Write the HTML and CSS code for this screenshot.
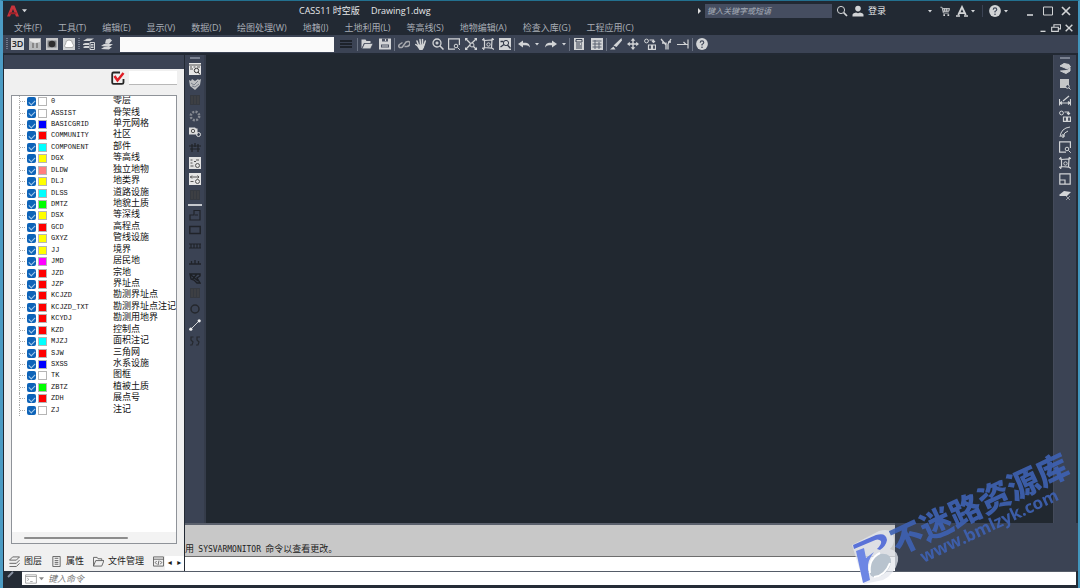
FILE: index.html
```html
<!DOCTYPE html>
<html lang="zh-CN">
<head>
<meta charset="utf-8">
<title>CASS11 时空版 Drawing1.dwg</title>
<link rel="stylesheet" href="styles.css">
</head>
<body>
<svg class="sprite" aria-hidden="true">
  <symbol id="i-caret" viewBox="0 0 4 4"><path d="M0 1h4L2 3.4z" fill="currentColor"/></symbol>
  <symbol id="i-search" viewBox="0 0 12 12"><circle cx="5" cy="5" r="3.6"/><path d="M7.7 7.7 11 11" stroke-width="1.7"/></symbol>
  <symbol id="i-user" viewBox="0 0 12 12"><circle cx="6" cy="3.6" r="2.8" fill="currentColor" stroke="none"/><path d="M.5 11.5V9.600Q1 8 4 7.500L6 8.200 8 7.500Q11 8 11.500 9.600V11.500z" fill="currentColor" stroke="none"/></symbol>
  <symbol id="i-cart" viewBox="0 0 12 12"><path d="M.5 1.500H2.500L4 8.500H10.500M3 3h8.500L10.500 6.500H3.600M3.200 4.800h8M5.500 3v3.500M8 3v3.500"/><path d="M4 10h2v2H4zM9 10h2v2H9z" fill="currentColor" stroke="none"/></symbol>
  <symbol id="i-a360" viewBox="0 0 12 12"><path d="M2.200 10 6 2l3.800 8M3 8.200h6" stroke-width="1.800"/><path d="M0 11h4M8 11h4" stroke-width="1.600"/></symbol>
  <symbol id="i-help" viewBox="0 0 12 12"><circle cx="6" cy="6" r="5.900" fill="currentColor" stroke="none"/><path d="M4.200 4.700Q4.300 2.900 6 2.900t1.800 1.700Q7.800 5.700 6 6.400V7.600" stroke="#3b4354" stroke-width="1.100"/><circle cx="6" cy="9.200" r=".8" fill="#3b4354" stroke="none"/></symbol>
  <symbol id="i-min" viewBox="0 0 12 12"><path d="M3 10h6" stroke-width="1.600"/></symbol>
  <symbol id="i-max" viewBox="0 0 12 12"><path d="M1.500 2h9v8h-9z"/></symbol>
  <symbol id="i-restore" viewBox="0 0 12 12"><path d="M3.500 5V2h8v5H9M.8 5h8v5h-8z" stroke-width="1.300"/></symbol>
  <symbol id="i-close" viewBox="0 0 12 12"><path d="m2 2 8 8M10 2l-8 8" stroke-width="1.700"/></symbol>

  <symbol id="i-img" viewBox="0 0 12 12"><path d="M0 0h12v12H0z" fill="#b9bbbd" stroke="none"/><path d="M1 1h10v3L6 5 1 3z" fill="#e6e6e6" stroke="none"/><path d="M3 5h2v5H3zM7 5h2v5H7z" fill="#888" stroke="none"/></symbol>
  <symbol id="i-render" viewBox="0 0 12 12"><path d="M0 0h12v12H0z" fill="#c6c7c8" stroke="none"/><path d="M1.500 2.500h9v7h-9z" fill="#7d7f82" stroke="none"/><circle cx="6" cy="6" r="3.300" fill="#2d2d2d" stroke="none"/></symbol>
  <symbol id="i-cloud" viewBox="0 0 12 12"><path d="M0 0h12v12H0z" fill="#d0d2d4" stroke="none"/><path d="M2.500 9.500Q.5 8 2.500 6 2.500 2 6 2t3.500 3.500Q12 7 9.500 9.500z" fill="#fff" stroke="#999" stroke-width=".8"/></symbol>
  <symbol id="i-layprop" viewBox="0 0 12 12"><path d="M0 3 4 .5H11L7 3zM0 6l2-1h4v2H0zM0 9l2-1h4v2H1z" fill="currentColor" stroke="none"/><path d="M7 4.500h4.500v7H7z" fill="#3b4354"/><path d="M8 6.500h2.500M8 8h2.500M8 9.500h2.500"/></symbol>
  <symbol id="i-layers" viewBox="0 0 12 12"><path d="M0 11 3 9h8l-3 2.500zM0 8l3-2h9L8 9z" fill="currentColor" stroke="none"/><path d="M4 5.500 5 1.500 9 .5l2 2L8 6z" fill="currentColor" stroke="none"/></symbol>
  <symbol id="i-lines" viewBox="0 0 12 12"><path d="M0 3h12M0 6h12M0 9h12" stroke="#15181c" stroke-width="1.500"/></symbol>
  <symbol id="i-open" viewBox="0 0 12 12"><path d="M.5 10.500v-9h4l1 1.500h4V5H3z" fill="currentColor" stroke="none"/><path d="M3.500 5.500H12L9.500 10.800H1z" fill="currentColor" stroke="#3b4354" stroke-width=".6"/></symbol>
  <symbol id="i-save" viewBox="0 0 12 12"><path d="M0 .5h12v11H0z" fill="currentColor" stroke="none"/><path d="M3 .5h6v3H3zM2 6.500h8v3H2z" fill="#4b5262" stroke="none"/><path d="M6.500 1v2M3 8h6" /></symbol>
  <symbol id="i-link" viewBox="0 0 12 12"><path d="M4 9.500H1.500Q0 8 1.500 6.500L4.500 4.500M4 9.500 8 4q3-1.500 4 1 0 3-3 3.500H6.500" stroke="#a7a9ae" stroke-width="1.500"/></symbol>
  <symbol id="i-hand" viewBox="0 0 12 12"><path d="M3.500 7 2 3M5.500 6 5 1.500M7.500 6V1.500M9 7l1.300-4M4 9 .8 6.500" stroke-width="1.500" stroke-linecap="round"/><path d="M3 6.500 9.700 6 9 9.500 7.500 12h-3L2.500 9z" fill="currentColor" stroke="none"/></symbol>
  <symbol id="i-zoom" viewBox="0 0 12 12"><circle cx="5" cy="5" r="4" stroke-width="1.300"/><path d="M3.500 5h3M5 3.500v3M7.800 7.800 11.500 11.500" stroke-width="1.500"/></symbol>
  <symbol id="i-zoomwin" viewBox="0 0 12 12"><path d="M7 11.200H.6V.8h10.800V7" stroke-width="1.200"/><circle cx="8" cy="8" r="1.800"/><path d="m9.500 9.500 2.300 2.300"/></symbol>
  <symbol id="i-zoomext" viewBox="0 0 12 12"><path d="m1 1 10 10M11 1 1 11" stroke-width="1.400"/><path d="M0 3V0h3zM12 3V0H9zM0 9v3h3zM12 9v3H9z" fill="currentColor" stroke="none"/><circle cx="7" cy="7" r="2" fill="#3b4354"/></symbol>
  <symbol id="i-zoomobj" viewBox="0 0 12 12"><path d="M2.500 2.500 10 2 9.500 10l-7-.5zM0 1.500l3 1M9 2.500l3-1.500M0 10.500l3-1M9 9.500l3 2M1.500 0l1 3M10.500 0l-1 3M2.500 9l-1 3" stroke-width="1.200"/><circle cx="6.500" cy="6.500" r="1.700"/></symbol>
  <symbol id="i-zoomprev" viewBox="0 0 12 12"><path d="M0 0h12v12H0z" fill="currentColor" stroke="none"/><circle cx="7" cy="5" r="2.600" stroke="#303746"/><path d="M8.500 7l3 3.500M5 6.500 1.500 9M1.500 3.500h3" stroke="#303746" stroke-width="1.300"/></symbol>
  <symbol id="i-undo" viewBox="0 0 12 12"><path d="M0 6 5 2.500v2.200h3Q11.500 5 12 9.500 10.500 7.200 8 7.200H5v2.300z" fill="currentColor" stroke="none"/></symbol>
  <symbol id="i-redo" viewBox="0 0 12 12"><path d="M12 6 7 2.500v2.200H4Q.5 5 0 9.500 1.500 7.200 4 7.200h3v2.300z" fill="currentColor" stroke="none"/></symbol>
  <symbol id="i-props" viewBox="0 0 12 12"><path d="M1 0h10v12H1z" fill="currentColor" stroke="none"/><path d="M3 1.500h6v2.500H3zM3 6h4M3 8h6M3 10h6M8 6h1" stroke="#3b4354"/></symbol>
  <symbol id="i-grid" viewBox="0 0 12 12"><path d="M0 0h12v12H0z" fill="currentColor" stroke="none"/><path d="M1.500 3h9M1.500 6h9M1.500 9h9M4 2v9M8 4v7" stroke="#5b6272"/></symbol>
  <symbol id="i-brush" viewBox="0 0 12 12"><path d="M11.500 0 12 2.500 6.500 9 3.500 7.500z" fill="currentColor" stroke="none"/><path d="M3.500 8.500 0 11.500h5.500z" fill="currentColor" stroke="none"/></symbol>
  <symbol id="i-move" viewBox="0 0 12 12"><path d="M6 1v10M1 6h10" stroke-width="1.400"/><path d="M6 0 8.300 2.800H3.700zM6 12l2.300-2.800H3.700zM0 6l2.800-2.300v4.600zM12 6 9.200 3.700v4.600z" fill="currentColor" stroke="none"/></symbol>
  <symbol id="i-copy" viewBox="0 0 12 12"><circle cx="2.500" cy="3" r="1.900"/><path d="M5.500 2H9.500V4M8 3l1.500 1.500L11 3M4.500 7h3v4.300h-3zM8.500 7h3v4.300h-3z" stroke-width="1.200"/></symbol>
  <symbol id="i-trim" viewBox="0 0 12 12"><path d="m1 1 5 6M11 1 8 6M6 4.500V11.500M8 6v5.500M8 4h3M2 5h3" stroke-width="1.300"/></symbol>
  <symbol id="i-extend" viewBox="0 0 12 12"><path d="M0 6.500h11M11 1.500v9M6.500 4 9 6.500" stroke-width="1.200"/></symbol>

  <symbol id="s-text" viewBox="0 0 12 12"><path d="M0 0h12v12H0z" fill="#e7e7e7" stroke="none"/><path d="M0 2h12M1 4h2M4.500 4h2M8 4h3M1 6h3" stroke="#555"/><circle cx="7.500" cy="7.500" r="2.200" stroke="#333"/><path d="m9 9 2 2.500" stroke="#333"/></symbol>
  <symbol id="s-shield" viewBox="0 0 12 12"><path d="m0 2 2 1 1-2 3 2 3-2 1 1 2-1-1 6-5 5-5-4z" fill="#bfc1c3" stroke="none"/><path d="m2 5 3 2 4-4M3 8l3 1 4-3" stroke="#6a707c" stroke-width=".8"/></symbol>
  <symbol id="s-dim" viewBox="0 0 12 12"><path d="M1 1h10v10H1z" fill="#353940" stroke="none"/><path d="M3 2v8M6 2v8M9 2v8" stroke="#474747"/></symbol>
  <symbol id="s-ring" viewBox="0 0 12 12"><circle cx="6" cy="6" r="4.200" stroke="#858991" stroke-width="2.500" stroke-dasharray="2 1.300"/></symbol>
  <symbol id="s-cam" viewBox="0 0 12 12"><path d="M0 1.500h6l1 1h1.500v6H0z" fill="#ddd" stroke="none"/><circle cx="4" cy="5" r="1.700" stroke="#555"/><circle cx="9.500" cy="8.500" r="2" stroke="#ddd"/></symbol>
  <symbol id="s-fence" viewBox="0 0 12 12"><path d="M0 5h12M1 8h10M3 3v8M6 2v4M9 3v8" stroke="#202226" stroke-width="1.200"/></symbol>
  <symbol id="s-form" viewBox="0 0 12 12"><path d="M0 0h12v12H0z" fill="#e1e1e1" stroke="none"/><path d="M1.500 3h2M1.500 6h2M1.500 9h3M5 5l1-1 1 1M7 3h3" stroke="#555"/><circle cx="8.500" cy="8.500" r="2" stroke="#555"/></symbol>
  <symbol id="s-form2" viewBox="0 0 12 12"><path d="M0 0h12v12H0z" fill="#e5e5e5" stroke="none"/><path d="M1 4h9M3 2.500 1.500 4 3 5.500M8.500 2.500 10 4 8.500 5.500M1.500 8.500h3" stroke="#555"/><circle cx="8.500" cy="8.500" r="2" stroke="#555"/></symbol>
  <symbol id="s-stair" viewBox="0 0 12 12"><path d="M1 11V6h4V1.500h6V11zM6 6h3" stroke="#202329" stroke-width="1.200"/></symbol>
  <symbol id="s-rect" viewBox="0 0 12 12"><path d="M.8 2.500h10.400v7H.8z" stroke="#202329" stroke-width="1.400"/></symbol>
  <symbol id="s-cells" viewBox="0 0 12 12"><path d="M0 4h12M0 8h12M2 4v4M5 4v4M8 4v4M11 4v4" stroke="#202329" stroke-width="1.200"/></symbol>
  <symbol id="s-ticks" viewBox="0 0 12 12"><path d="M0 8h12M2.500 5v3M6 4v4M9.500 5v3" stroke="#202329" stroke-width="1.300"/></symbol>
  <symbol id="s-hatch" viewBox="0 0 12 12"><path d="M1 2h10v2L8 6l3 5H8L5 8 2 7zM2 3l7 6M8 2 3 8" stroke="#1d2025" stroke-width="1.400"/></symbol>
  <symbol id="s-circle" viewBox="0 0 12 12"><circle cx="6" cy="6" r="4" stroke="#25282d" stroke-width="1.500"/></symbol>
  <symbol id="s-node" viewBox="0 0 12 12"><path d="m1.500 10.500 9-9"/><circle cx="1.800" cy="10.200" r="1.600" fill="#eee" stroke="none"/><circle cx="10.200" cy="1.800" r="1.600" fill="#eee" stroke="none"/></symbol>
  <symbol id="s-curve" viewBox="0 0 12 12"><path d="M4.500 2H2v3l2 2-1 3H1M11 2H8v3l2 2-1 3H7" stroke="#26292e" stroke-width="1.200"/></symbol>

  <symbol id="r-erase" viewBox="0 0 12 12"><path d="M1 3 5 .5 10 1.500 11.500 4 8 6 5 4.500zM1.500 8 7 10.500 11 8V5L8 7.500z" fill="#c9cbce" stroke="#c9cbce"/></symbol>
  <symbol id="r-block" viewBox="0 0 12 12"><path d="M1 1h9v9H1z" fill="#c4c6c8" stroke="none"/><circle cx="8.500" cy="8.500" r="1.800" fill="#3b4354"/><path d="m10 10 1.500 1.500"/></symbol>
  <symbol id="r-mirror" viewBox="0 0 12 12"><path d="M.5 5v6.500M11.500 5v6.500M1 9h10M3 7.500 1 9l2 1.500M9 7.500 11 9 9 10.500M4 7 10 2" stroke-width="1.200"/></symbol>
  <symbol id="r-arc" viewBox="0 0 12 12"><path d="M1 11Q2 2 11 1M4 11Q5 6 9 5"/><circle cx="4" cy="10" r="1.300"/></symbol>
  <symbol id="r-scale" viewBox="0 0 12 12"><path d="M.8.8h10.400v10.400H.8zM.8 7H6v4.200" stroke-width="1.200"/></symbol>
  <symbol id="r-break" viewBox="0 0 12 12"><path d="M0 6 5 2l7 1-4 4H1z" fill="#d5d7d9" stroke="none"/><path d="m7 7 4 4M11 7l-4 4" stroke="#9a9da3"/></symbol>
  <symbol id="t-layers" viewBox="0 0 12 12"><path d="M4 1h7.500L8 4.500H.5zM.5 8H8l3.500-3.500M.5 11.500H8L11.500 8"/></symbol>
  <symbol id="t-props" viewBox="0 0 12 12"><path d="M2 .5h8v11H2zM4 2.500h4M4 5h4M4 7h4M4 9h4"/></symbol>
  <symbol id="t-folder" viewBox="0 0 12 12"><path d="M.5 11V1.500h4l1 1.500h4v2M.5 11 3 5h9l-2.500 6z"/></symbol>
  <symbol id="t-code" viewBox="0 0 12 12"><path d="M.5 1h11v10H.5zM.5 3.500h11M4 5.500 2.500 7 4 9M8 5.500 9.500 7 8 9M6.500 5l-1 5"/></symbol>
  <symbol id="t-prompt" viewBox="0 0 14 12"><path d="M.5 1h13v10H.5zM.5 3h13M2.500 5l2 1.500-2 1.500M6 9h3"/></symbol>
</svg>

<div class="window">
  <header class="titlebar">
    <button class="app-menu" aria-label="应用程序菜单">
      <svg class="logo" viewBox="0 0 12 12"><path d="M0 11.500 4.500 .5h3L12 11.500H9L6 4 3 11.500z" fill="#c8343c"/><path d="M3 7.300h6.500v2H2z" fill="#9c2229"/></svg>
      <svg class="caret wide"><use href="#i-caret"/></svg>
    </button>
    <h1 class="title"><span>CASS11 时空版</span><span>Drawing1.dwg</span></h1>
    <div class="tb-search">
      <span class="play"></span>
      <input class="search-box" type="text" placeholder="键入关键字或短语" aria-label="搜索">
      <button aria-label="搜索"><svg class="icon"><use href="#i-search"/></svg></button>
      <button class="login"><svg class="icon"><use href="#i-user"/></svg>登录</button>
    </div>
    <div class="tb-apps">
      <svg class="caret"><use href="#i-caret"/></svg>
      <button class="cart" aria-label="购物车"><svg class="icon small"><use href="#i-cart"/></svg></button>
      <button aria-label="应用"><svg class="icon"><use href="#i-a360"/></svg></button>
      <svg class="caret"><use href="#i-caret"/></svg>
      <span class="tb-sep"></span>
      <button aria-label="帮助"><svg class="icon"><use href="#i-help"/></svg></button>
      <svg class="caret"><use href="#i-caret"/></svg>
    </div>
    <div class="win-controls">
      <button aria-label="最小化"><svg class="icon"><use href="#i-min"/></svg></button>
      <button aria-label="最大化"><svg class="icon"><use href="#i-max"/></svg></button>
      <button aria-label="关闭"><svg class="icon"><use href="#i-close"/></svg></button>
    </div>
  </header>

  <nav class="menubar">
    <button>文件(F)</button><button>工具(T)</button><button>编辑(E)</button><button>显示(V)</button><button>数据(D)</button><button>绘图处理(W)</button><button>地籍(J)</button><button>土地利用(L)</button><button>等高线(S)</button><button>地物编辑(A)</button><button>检查入库(G)</button><button>工程应用(C)</button>
    <div class="doc-controls">
      <button aria-label="最小化文档"><svg class="icon small"><use href="#i-min"/></svg></button>
      <button aria-label="还原文档"><svg class="icon small"><use href="#i-restore"/></svg></button>
      <button aria-label="关闭文档"><svg class="icon small"><use href="#i-close"/></svg></button>
    </div>
  </nav>

  <div class="toolbar">
    <span class="grip"></span>
    <div class="group four">
      <button class="three-d">3D</button>
      <button aria-label="图像"><svg class="icon"><use href="#i-img"/></svg></button>
      <button aria-label="渲染"><svg class="icon"><use href="#i-render"/></svg></button>
      <button aria-label="云"><svg class="icon"><use href="#i-cloud"/></svg></button>
    </div>
    <span class="grip"></span>
    <div class="group two">
      <button aria-label="图层特性"><svg class="icon"><use href="#i-layprop"/></svg></button>
      <button aria-label="图层"><svg class="icon"><use href="#i-layers"/></svg></button>
    </div>
    <select class="layer-select" aria-label="当前图层"><option></option></select>
    <button class="lines" aria-label="线型"><svg class="icon"><use href="#i-lines"/></svg></button>
    <span class="sep"></span>
    <div class="group two">
      <button aria-label="打开"><svg class="icon"><use href="#i-open"/></svg></button>
      <button aria-label="保存"><svg class="icon"><use href="#i-save"/></svg></button>
    </div>
    <span class="sep"></span>
    <div class="group seven">
      <button aria-label="链接"><svg class="icon"><use href="#i-link"/></svg></button>
      <button aria-label="平移"><svg class="icon"><use href="#i-hand"/></svg></button>
      <button aria-label="缩放"><svg class="icon"><use href="#i-zoom"/></svg></button>
      <button aria-label="窗口缩放"><svg class="icon"><use href="#i-zoomwin"/></svg></button>
      <button aria-label="范围缩放"><svg class="icon"><use href="#i-zoomext"/></svg></button>
      <button aria-label="对象缩放"><svg class="icon"><use href="#i-zoomobj"/></svg></button>
      <button aria-label="上一视图"><svg class="icon"><use href="#i-zoomprev"/></svg></button>
    </div>
    <span class="sep"></span>
    <div class="group history">
      <button aria-label="放弃"><svg class="icon"><use href="#i-undo"/></svg></button>
      <svg class="caret"><use href="#i-caret"/></svg>
      <button aria-label="重做"><svg class="icon"><use href="#i-redo"/></svg></button>
      <svg class="caret"><use href="#i-caret"/></svg>
    </div>
    <span class="sep"></span>
    <div class="group two">
      <button aria-label="特性"><svg class="icon"><use href="#i-props"/></svg></button>
      <button aria-label="表格"><svg class="icon"><use href="#i-grid"/></svg></button>
    </div>
    <span class="sep"></span>
    <div class="group five">
      <button aria-label="特性匹配"><svg class="icon"><use href="#i-brush"/></svg></button>
      <button aria-label="移动"><svg class="icon"><use href="#i-move"/></svg></button>
      <button aria-label="复制"><svg class="icon"><use href="#i-copy"/></svg></button>
      <button aria-label="修剪"><svg class="icon"><use href="#i-trim"/></svg></button>
      <button aria-label="延伸"><svg class="icon"><use href="#i-extend"/></svg></button>
    </div>
    <span class="sep"></span>
    <button aria-label="帮助"><svg class="icon"><use href="#i-help"/></svg></button>
  </div>

  <main class="main">
    <aside class="panel">
      <div class="panel-head"></div>
      <div class="panel-body">
        <div class="filter">
          <button aria-label="全选"><svg class="check-all" viewBox="0 0 14 14"><path d="M9 1.500H2.500Q1.200 1.500 1.200 3v8.500q0 1.300 1.300 1.300H11q1.500 0 1.500-1.300V8" fill="none" stroke="#262626" stroke-width="1.800"/><path d="m3.500 5 3 4.500L12.500 2" fill="none" stroke="#e01e26" stroke-width="2.500"/></svg></button>
          <input type="text" aria-label="筛选图层">
        </div>
        <div class="tree-box">
          <ul class="tree" id="tree"></ul>
          <div class="hscroll"><div class="thumb"></div></div>
        </div>
        <div class="tabs">
          <button><svg class="icon"><use href="#t-layers"/></svg>图层</button>
          <button><svg class="icon"><use href="#t-props"/></svg>属性</button>
          <button><svg class="icon"><use href="#t-folder"/></svg>文件管理</button>
          <button class="code-tab" aria-label="代码"><svg class="icon"><use href="#t-code"/></svg></button>
          <div class="tab-arrows"><button aria-label="上一个">◂</button><button aria-label="下一个">▸</button></div>
        </div>
      </div>
    </aside>

    <section class="work">
      <div class="stage">
        <div class="strip">
          <span class="strip-grip"></span>
          <div class="strip-group">
            <button aria-label="文字查找"><svg class="icon"><use href="#s-text"/></svg></button>
            <button aria-label="检查"><svg class="icon"><use href="#s-shield"/></svg></button>
            <button aria-label="填充"><svg class="icon"><use href="#s-dim"/></svg></button>
            <button aria-label="环"><svg class="icon"><use href="#s-ring"/></svg></button>
            <button aria-label="影像"><svg class="icon"><use href="#s-cam"/></svg></button>
            <button aria-label="栅栏"><svg class="icon"><use href="#s-fence"/></svg></button>
            <button aria-label="坐标"><svg class="icon"><use href="#s-form"/></svg></button>
            <button aria-label="距离"><svg class="icon"><use href="#s-form2"/></svg></button>
            <button aria-label="面积"><svg class="icon"><use href="#s-dim"/></svg></button>
          </div>
          <span class="strip-line"></span>
          <div class="strip-group">
            <button aria-label="多点房屋"><svg class="icon"><use href="#s-stair"/></svg></button>
            <button aria-label="四点房屋"><svg class="icon"><use href="#s-rect"/></svg></button>
            <button aria-label="围墙"><svg class="icon"><use href="#s-cells"/></svg></button>
            <button aria-label="陡坎"><svg class="icon"><use href="#s-ticks"/></svg></button>
            <button aria-label="植被"><svg class="icon"><use href="#s-hatch"/></svg></button>
            <button aria-label="电力"><svg class="icon"><use href="#s-dim"/></svg></button>
            <button aria-label="圆"><svg class="icon"><use href="#s-circle"/></svg></button>
            <button aria-label="直线"><svg class="icon"><use href="#s-node"/></svg></button>
            <button aria-label="曲线"><svg class="icon"><use href="#s-curve"/></svg></button>
          </div>
        </div>
        <div class="canvas"></div>
        <div class="strip strip-right">
          <span class="strip-grip"></span>
          <div class="strip-group">
            <button aria-label="删除"><svg class="icon"><use href="#r-erase"/></svg></button>
            <button aria-label="块"><svg class="icon"><use href="#r-block"/></svg></button>
            <button aria-label="标注"><svg class="icon"><use href="#r-mirror"/></svg></button>
            <button aria-label="复制"><svg class="icon"><use href="#i-copy"/></svg></button>
            <button aria-label="偏移"><svg class="icon"><use href="#r-arc"/></svg></button>
            <button aria-label="窗口"><svg class="icon"><use href="#i-zoomwin"/></svg></button>
            <button aria-label="阵列"><svg class="icon"><use href="#i-zoomobj"/></svg></button>
            <button aria-label="比例"><svg class="icon"><use href="#r-scale"/></svg></button>
            <button aria-label="打断"><svg class="icon"><use href="#r-break"/></svg></button>
          </div>
        </div>
      </div>
      <div class="console">
        <div class="log"><p>用 <code>SYSVARMONITOR</code> 命令以查看更改。</p></div>
        <div class="log-input"></div>
      </div>
    </section>
  </main>

  <footer class="command">
    <svg class="wrench" viewBox="0 0 14 14"><path d="m3 6 5-5" stroke="#8b93a3" stroke-width="2"/></svg>
    <div class="command-line">
      <svg class="prompt"><use href="#t-prompt"/></svg>
      <svg class="caret wide"><use href="#i-caret"/></svg>
      <input type="text" placeholder="键入命令" aria-label="命令">
    </div>
  </footer>
</div>

<div class="watermark">
  <svg class="mark" viewBox="0 0 50 60">
    <path d="M2 19 29 5q14-4 15 8 0 6-4 10 9 2 8 12-3 13-15 19L14 58z" fill="#e4e7ee" opacity=".75"/>
    <path d="M3 19 26 9q10-3 11 5-1 6-7 10l-3-1q5-5 4-8-3-3-8 0L4 23z" fill="#5a72d8"/>
    <path d="M6 25l8-3 2 10 8-6q-7 9-6 17l2 11-7 3z" fill="#6d86e4"/>
    <path d="M20 48q-2-15 9-20 13-2 12 9-3 11-13 14-6 1-8-3z" fill="#b8c3ce"/>
    <path d="M20 47q-2-14 10-20M24 51q11-1 16-14" fill="none" stroke="#fff" stroke-width="2"/>
  </svg>
  <div class="mark-text">
    <div class="mark-name">不迷路资源库</div>
    <div class="mark-url">www.bmlzyk.com</div>
  </div>
</div>
<script src="script.js"></script>
</body>
</html>
```

FILE: styles.css
```css
* { box-sizing: border-box; }

body {
  margin: 0;
  background: #212830;
  font-family: "Open Sans", "Noto Sans CJK SC", sans-serif;
  font-size: 9px;
  line-height: 12px;
  color: #d4d6da;
}

button {
  display: inline-flex;
  align-items: center;
  justify-content: center;
  margin: 0;
  padding: 0;
  border: 0;
  background: none;
  color: inherit;
  font: inherit;
  white-space: nowrap;
}

input, select { font: inherit; border: 0; padding: 0; margin: 0; border-radius: 0; min-width: 0; }

.sprite { position: absolute; width: 0; height: 0; }
.icon { width: 12px; height: 12px; flex: none; fill: none; stroke: currentColor; color: #d2d4d6; }
.icon.small { width: 10px; height: 10px; }
.caret { width: 4px; height: 4px; flex: none; }
.caret.wide { width: 5px; height: 5px; }

.window {
  display: flex;
  flex-direction: column;
  height: 100vh;
  border-top: 1px solid #23708f;
  border-left: 3px solid #4c9cc4;
  border-right: 2px solid #4296bd;
}

/* Title bar */
.titlebar { display: flex; align-items: center; height: 19px; padding: 0 6px 0 4px; background: #222933; }
.app-menu { gap: 3px; }
.logo { width: 12px; height: 12px; }
.title { display: flex; gap: 11px; margin: 0 auto 0 272px; font-size: 9px; font-weight: 400; color: #e6e8ea; }
.tb-search { display: flex; align-items: center; gap: 4px; }
.play { border: 3px solid transparent; border-left-color: #ddd; border-right: 0; }
.search-box { width: 127px; height: 14px; padding: 0 2px; background: #454d60; color: #eee; font-size: 8px; font-style: italic; }
.search-box::placeholder { color: #a7adb8; opacity: 1; }
.login { gap: 4px; color: #e6e8ea; }
.tb-apps { display: flex; align-items: center; gap: 3px; margin-left: 42px; }
.cart { margin: 0 3px 0 5px; }
.tb-sep { width: 1px; height: 12px; margin: 0 3px 0 4px; background: #3b4354; }
.win-controls { display: flex; gap: 6px; margin-left: 16px; }

/* Menu bar */
.menubar { display: flex; align-items: center; gap: 16px; height: 15px; padding: 0 4px 0 11px; background: #222933; color: #a9aeb6; }
.doc-controls { display: flex; gap: 3px; margin-left: auto; }

/* Toolbar */
.toolbar { display: flex; align-items: center; gap: 3px; height: 18px; padding-left: 3px; background: #3b4354; }
.grip { width: 2px; height: 12px; background: repeating-linear-gradient(#71798a 0 1px, #3b4354 1px 2px); }
.sep { width: 1px; height: 13px; background: #6a7282; }
.group { display: flex; align-items: center; justify-content: space-between; }
.two { width: 30px; }
.four { width: 64px; }
.five { width: 79px; }
.seven { width: 113px; }
.history { width: 48px; }
.three-d { width: 13px; height: 12px; background: #d6d8da; color: #20242b; font-weight: 600; }
.layer-select { width: 214px; height: 15px; margin-left: 4px; background: #fafafa; appearance: none; }
.lines { width: 17px; }

/* Main area */
.main { display: flex; flex: 1; min-height: 0; border-top: 2px solid #222933; background: #3b4354; }
.panel { display: flex; flex-direction: column; width: 182px; border-left: 1px solid #222933; border-right: 1px solid #222933; color: #1c1c1c; }
.panel-head { height: 14px; background: #3b4354; }
.panel-body { display: flex; flex-direction: column; flex: 1; min-height: 0; padding: 2px 7px 0; background: #f0f0f0; }
.filter { display: flex; align-items: center; justify-content: flex-end; gap: 4px; height: 14px; margin-bottom: 10px; }
.filter input { width: 48px; height: 14px; background: #fff; border-bottom: 1px solid #b8b8b8; }
.check-all { width: 14px; height: 14px; }

.tree-box { display: flex; flex-direction: column; flex: 1; min-height: 0; border: 1px solid #8f9399; background: #fff; overflow: hidden; }
.tree {
  display: grid;
  grid-auto-rows: 1fr;
  height: 320px;
  margin: 0 0 auto 7px;
  padding: 0;
  list-style: none;
  font-family: "Liberation Mono", "Noto Sans CJK SC", monospace;
  line-height: 11px;
}
.tree li { border-left: 1px dotted #aaa; }
.tree label { display: grid; grid-template-columns: 5px 9px 9px 62px 1fr; column-gap: 2px; align-items: center; height: 100%; white-space: nowrap; color: #111; }
.tree label::before { content: ""; border-top: 1px dotted #aaa; }
.tree input { appearance: none; width: 9px; height: 9px; border-radius: 2px; background: #0d63b8; display: grid; place-items: center; }
.tree input::after { content: ""; width: 5px; height: 3px; border: solid #a9cbea; border-width: 0 0 1px 1px; transform: rotate(-45deg); }
.swatch { width: 9px; height: 9px; border: 1px solid #b5b5b5; }
.code { font-size: 7px; padding-left: 2px; }
.hscroll { height: 11px; padding: 5px 48px 0 12px; background: #f3f3f3; }
.thumb { height: 2px; background: #8d8d8d; border-radius: 1px; }

.tabs { display: flex; align-items: center; gap: 9px; height: 18px; margin: 8px -7px 1px -2px; }
.tabs button { gap: 4px; }
.tabs .icon { width: 11px; height: 11px; color: #5e5e5e; }
.tabs .code-tab { margin-right: -8px; }
.tab-arrows { display: flex; flex: 1; align-self: stretch; align-items: center; margin-top: 4px; background: #fff; }
.tab-arrows button { flex: 1; font-family: "DejaVu Sans", sans-serif; font-size: 8px; }

.work { display: flex; flex-direction: column; flex: 1; min-width: 0; }
.stage { display: flex; flex: 1; min-height: 0; }
.strip { width: 21px; display: flex; flex-direction: column; align-items: center; padding-top: 2px; border-right: 2px solid #353c4a; }
.strip-right { width: 25px; border-right: 2px solid #252c36; border-left: 1px solid #444b5b; }
.strip-grip { width: 10px; height: 2px; margin-bottom: 2px; background: #7a8190; }
.strip-group { display: flex; flex-direction: column; justify-content: space-between; height: 141px; }
.strip-group button { height: 15px; }
.strip-line { width: 14px; height: 2px; margin: 2px 0 1px; background: #c5c8cd; }
.canvas { flex: 1; background: #212830; }

.console { display: flex; flex-direction: column; height: 48px; margin-right: 183px; border-top: 2px solid #5b616d; }
.log { display: flex; align-items: flex-end; flex: 1; background: #c8c8c8; color: #222; overflow: hidden; }
.log p { margin: 0; white-space: nowrap; }
.log code { font-family: "DejaVu Sans Mono", monospace; font-size: 8px; padding: 0 2px; }
.log-input { height: 15px; background: #fff; border-top: 1px solid #6d6d6d; }

/* Command line */
.command { display: flex; height: 17px; padding: 0 2px 3px 2px; background: #252c36; }
.wrench { width: 14px; height: 14px; margin-right: 3px; }
.command-line { display: flex; align-items: center; gap: 2px; flex: 1; padding-left: 3px; background: #fff; border-top: 1px solid #555c68; color: #888; }
.prompt { width: 12px; height: 10px; fill: none; stroke: #999; }
.command-line input { flex: 1; margin-left: 2px; background: none; font-style: italic; }
.command-line input::placeholder { color: #777; opacity: 1; }

/* Watermark over the workspace */
.watermark { position: fixed; right: 0; bottom: 0; width: 230px; height: 150px; pointer-events: none; }
.mark { position: absolute; left: 0; bottom: 2px; width: 50px; height: 60px; }
.mark-text { position: absolute; left: 57px; bottom: 13px; transform: rotate(-25deg); transform-origin: 0 100%; color: #3f62b4; font-weight: 700; white-space: nowrap; opacity: 0.9; }
.mark-name { font-size: 32px; line-height: 32px; font-family: "Noto Sans CJK SC", sans-serif; font-weight: 900; }
.mark-url { padding-left: 20px; font-size: 17px; line-height: 20px; }
```

FILE: script.js
```js
const layers = [
  ["0", "零层", "#fff"],
  ["ASSIST", "骨架线", "#fff"],
  ["BASICGRID", "单元网格", "#00f"],
  ["COMMUNITY", "社区", "#f00"],
  ["COMPONENT", "部件", "#0ff"],
  ["DGX", "等高线", "#ff0"],
  ["DLDW", "独立地物", "#ff7f7f"],
  ["DLJ", "地类界", "#ff0"],
  ["DLSS", "道路设施", "#0ff"],
  ["DMTZ", "地貌土质", "#0f0"],
  ["DSX", "等深线", "#ff0"],
  ["GCD", "高程点", "#f00"],
  ["GXYZ", "管线设施", "#ff0"],
  ["JJ", "境界", "#ff0"],
  ["JMD", "居民地", "#f0f"],
  ["JZD", "宗地", "#f00"],
  ["JZP", "界址点", "#f00"],
  ["KCJZD", "勘测界址点", "#f00"],
  ["KCJZD_TXT", "勘测界址点注记", "#f00"],
  ["KCYDJ", "勘测用地界", "#f00"],
  ["KZD", "控制点", "#f00"],
  ["MJZJ", "面积注记", "#0ff"],
  ["SJW", "三角网", "#f00"],
  ["SXSS", "水系设施", "#00f"],
  ["TK", "图框", "#fff"],
  ["ZBTZ", "植被土质", "#0f0"],
  ["ZDH", "展点号", "#f00"],
  ["ZJ", "注记", "#fff"]
];

document.getElementById("tree").innerHTML = layers.map(([code, name, color]) =>
  `<li><label><input type="checkbox" checked><span class="swatch" style="background:${color}"></span>` +
  `<span class="code">${code}</span><span>${name}</span></label></li>`
).join("");
```
